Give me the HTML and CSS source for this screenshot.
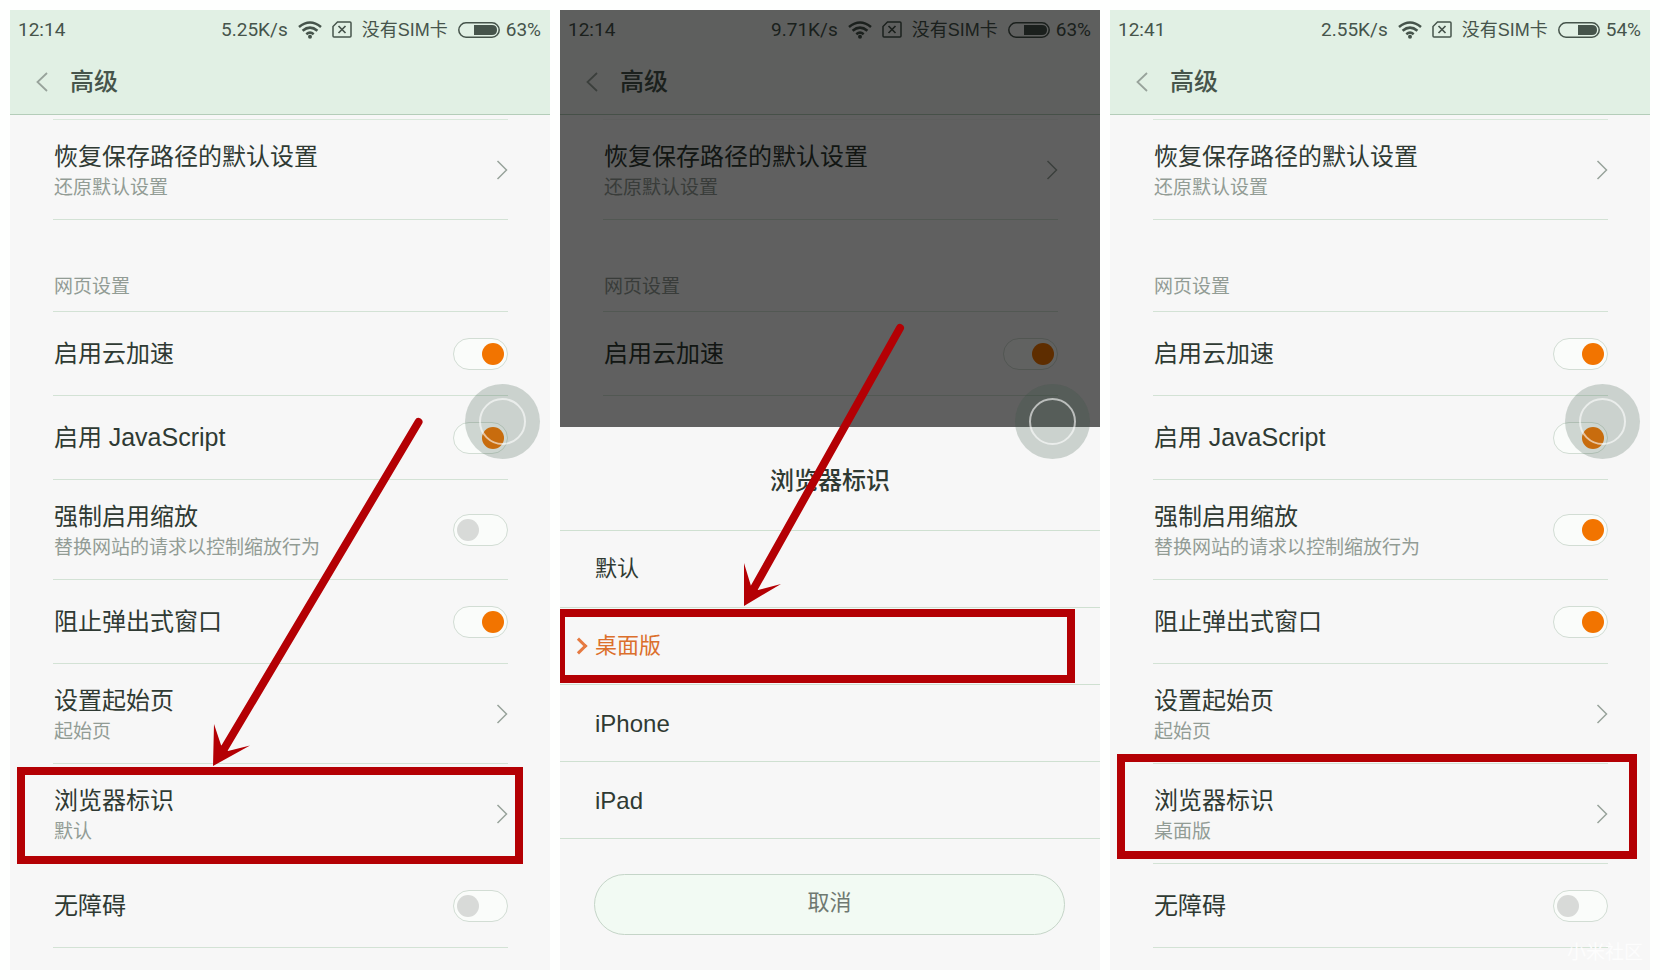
FILE: index.html
```html
<!DOCTYPE html>
<html lang="zh-CN">
<head>
<meta charset="utf-8">
<title>浏览器标识设置</title>
<link rel="stylesheet" href="styles.css">
</head>
<body>
<svg class="sprite" aria-hidden="true">
  <symbol id="wifi" viewBox="0 0 24 18">
    <path d="M1 6Q12-3 23 6M4.600 9.800Q12 3.600 19.400 9.800M8.300 13.200Q12 10.200 15.700 13.200" fill="none" stroke="currentColor" stroke-width="2.600"/>
    <circle cx="12" cy="15.800" r="2" fill="currentColor"/>
  </symbol>
  <symbol id="sim" viewBox="0 0 20 17">
    <path d="M5.500 1H18Q19 1 19 2V15Q19 16 18 16H2Q1 16 1 15V5.500Z" fill="none" stroke="currentColor" stroke-width="1.500"/>
    <path d="M6.500 5L13.500 12M13.500 5L6.500 12" stroke="currentColor" stroke-width="1.700"/>
  </symbol>
  <symbol id="battery63" viewBox="0 0 42 16">
    <rect x=".8" y=".8" width="40.400" height="14.400" rx="7.200" fill="none" stroke="currentColor" stroke-width="1.500"/>
    <path d="M16 3H34Q39 3 39 8T34 13H16Z" fill="currentColor"/>
  </symbol>
  <symbol id="battery54" viewBox="0 0 42 16">
    <rect x=".8" y=".8" width="40.400" height="14.400" rx="7.200" fill="none" stroke="currentColor" stroke-width="1.500"/>
    <path d="M20 3H34Q39 3 39 8T34 13H20Z" fill="currentColor"/>
  </symbol>
  <symbol id="next" viewBox="0 0 12 20">
    <path d="M1.500 1L10.500 10L1.500 19" fill="none" stroke="currentColor" stroke-width="1.500"/>
  </symbol>
  <symbol id="back" viewBox="0 0 12 20">
    <path d="M11 1L1.500 10L11 19" fill="none" stroke="currentColor" stroke-width="1.800"/>
  </symbol>
</svg>

<main class="steps">
  <section class="phone">
    <header class="top">
      <div class="status">
        <time class="clock">12:14</time>
        <span>5.25K/s</span>
        <svg class="icon-wifi"><use href="#wifi"/></svg>
        <svg class="icon-sim"><use href="#sim"/></svg>
        <span class="carrier">没有SIM卡</span>
        <span class="battery"><svg class="icon-battery"><use href="#battery63"/></svg>63%</span>
      </div>
      <div class="titlebar">
        <button class="back" aria-label="返回"><svg class="arrow"><use href="#back"/></svg></button>
        <h1>高级</h1>
      </div>
    </header>
    <div class="settings">
      <button class="row tall"><span class="text"><span class="name">恢复保存路径的默认设置</span><span class="note">还原默认设置</span></span><svg class="arrow"><use href="#next"/></svg></button>
      <h2 class="group">网页设置</h2>
      <label class="row"><span class="name">启用云加速</span><input class="switch" type="checkbox" checked></label>
      <label class="row"><span class="name">启用 <span class="latin">JavaScript</span></span><input class="switch" type="checkbox" checked></label>
      <label class="row tall"><span class="text"><span class="name">强制启用缩放</span><span class="note">替换网站的请求以控制缩放行为</span></span><input class="switch" type="checkbox"></label>
      <label class="row"><span class="name">阻止弹出式窗口</span><input class="switch" type="checkbox" checked></label>
      <button class="row tall"><span class="text"><span class="name">设置起始页</span><span class="note">起始页</span></span><svg class="arrow"><use href="#next"/></svg></button>
      <button class="row tall"><span class="text"><span class="name">浏览器标识</span><span class="note">默认</span></span><svg class="arrow"><use href="#next"/></svg><span class="mark mark-first"></span></button>
      <label class="row"><span class="name">无障碍</span><input class="switch" type="checkbox"></label>
    </div>
    <div class="assist"></div>
    <svg class="pointer" viewBox="0 0 540 960" preserveAspectRatio="none" aria-hidden="true">
      <path d="M408.500 412L214 739" stroke="currentColor" stroke-width="8" stroke-linecap="round"/>
      <path d="M203 756L204 714L211 735L218 741L240 735.500Z" fill="currentColor"/>
    </svg>
  </section>

  <section class="phone">
    <div class="behind">
      <header class="top">
        <div class="status">
          <time class="clock">12:14</time>
          <span>9.71K/s</span>
          <svg class="icon-wifi"><use href="#wifi"/></svg>
          <svg class="icon-sim"><use href="#sim"/></svg>
          <span class="carrier">没有SIM卡</span>
          <span class="battery"><svg class="icon-battery"><use href="#battery63"/></svg>63%</span>
        </div>
        <div class="titlebar">
          <button class="back" aria-label="返回"><svg class="arrow"><use href="#back"/></svg></button>
          <h1>高级</h1>
        </div>
      </header>
      <div class="settings">
        <button class="row tall"><span class="text"><span class="name">恢复保存路径的默认设置</span><span class="note">还原默认设置</span></span><svg class="arrow"><use href="#next"/></svg></button>
        <h2 class="group">网页设置</h2>
        <label class="row"><span class="name">启用云加速</span><input class="switch" type="checkbox" checked></label>
      </div>
    </div>
    <form class="sheet">
      <h2 class="sheet-title">浏览器标识</h2>
      <label class="option"><input type="radio" name="agent">默认</label>
      <label class="option"><input type="radio" name="agent" checked>桌面版<span class="mark mark-option"></span></label>
      <label class="option latin-option"><input type="radio" name="agent">iPhone</label>
      <label class="option latin-option"><input type="radio" name="agent">iPad</label>
      <div class="sheet-foot"><button class="cancel" type="button">取消</button></div>
    </form>
    <div class="assist"></div>
    <svg class="pointer" viewBox="0 0 540 960" preserveAspectRatio="none" aria-hidden="true">
      <path d="M340 318L193 580" stroke="currentColor" stroke-width="8" stroke-linecap="round"/>
      <path d="M184 596L184 553L191 576L198 580L221 574Z" fill="currentColor"/>
    </svg>
  </section>

  <section class="phone">
    <header class="top">
      <div class="status">
        <time class="clock">12:41</time>
        <span>2.55K/s</span>
        <svg class="icon-wifi"><use href="#wifi"/></svg>
        <svg class="icon-sim"><use href="#sim"/></svg>
        <span class="carrier">没有SIM卡</span>
        <span class="battery"><svg class="icon-battery"><use href="#battery54"/></svg>54%</span>
      </div>
      <div class="titlebar">
        <button class="back" aria-label="返回"><svg class="arrow"><use href="#back"/></svg></button>
        <h1>高级</h1>
      </div>
    </header>
    <div class="settings">
      <button class="row tall"><span class="text"><span class="name">恢复保存路径的默认设置</span><span class="note">还原默认设置</span></span><svg class="arrow"><use href="#next"/></svg></button>
      <h2 class="group">网页设置</h2>
      <label class="row"><span class="name">启用云加速</span><input class="switch" type="checkbox" checked></label>
      <label class="row"><span class="name">启用 <span class="latin">JavaScript</span></span><input class="switch" type="checkbox" checked></label>
      <label class="row tall"><span class="text"><span class="name">强制启用缩放</span><span class="note">替换网站的请求以控制缩放行为</span></span><input class="switch" type="checkbox" checked></label>
      <label class="row"><span class="name">阻止弹出式窗口</span><input class="switch" type="checkbox" checked></label>
      <button class="row tall"><span class="text"><span class="name">设置起始页</span><span class="note">起始页</span></span><svg class="arrow"><use href="#next"/></svg></button>
      <button class="row tall"><span class="text"><span class="name">浏览器标识</span><span class="note">桌面版</span></span><svg class="arrow"><use href="#next"/></svg><span class="mark mark-last"></span></button>
      <label class="row"><span class="name">无障碍</span><input class="switch" type="checkbox"></label>
    </div>
    <div class="assist"></div>
    <span class="watermark">小米社区</span>
  </section>
</main>
</body>
</html>
```
FILE: styles.css
```css
* { box-sizing: border-box; }

body {
  margin: 0;
  background: #fefffe;
  color: #2f3a33;
  font-family: "Liberation Sans", "Noto Sans CJK SC", sans-serif;
}

h1, h2 { margin: 0; font-weight: 400; }

button {
  border: 0;
  padding: 0;
  background: none;
  color: inherit;
  font: inherit;
  text-align: left;
}

.sprite { position: absolute; width: 0; height: 0; }

.steps {
  display: grid;
  grid-template-columns: repeat(3, 1fr);
  gap: 10px;
  padding: 10px;
}

.phone {
  position: relative;
  overflow: hidden;
  background: #f7f7f7;
}

/* status bar and title */
.top {
  background: #e1f0e4;
  border-bottom: 1px solid #b4cdb9;
  color: #46544b;
}

.status {
  display: flex;
  align-items: center;
  gap: 10px;
  height: 39px;
  padding: 0 9px 0 8px;
  font-family: Roboto, "Noto Sans CJK SC", sans-serif;
  font-size: 19px;
  line-height: 24px;
}

.clock { flex: 1; }
.carrier { font-family: "Liberation Sans", "Noto Sans CJK SC", sans-serif; font-size: 18px; }
.battery { display: flex; align-items: center; gap: 6px; }
.icon-wifi { width: 24px; height: 18px; }
.icon-sim { width: 20px; height: 17px; }
.icon-battery { width: 42px; height: 16px; }

.titlebar {
  display: flex;
  align-items: center;
  gap: 22px;
  height: 65px;
  padding: 0 26px 0 26px;
}

.titlebar h1 { font-size: 24px; line-height: 34px; font-weight: 500; }
.arrow { display: block; flex: none; width: 12px; height: 20px; color: #98a39b; }

/* settings list */
.settings {
  margin: 4px 42px 22px 43px;
  border-top: 1px solid #d9e8db;
}

.row {
  position: relative;
  display: flex;
  align-items: center;
  justify-content: space-between;
  width: 100%;
  min-height: 84px;
  padding-left: 1px;
  border-bottom: 1px solid #d3e2d5;
}

.tall { min-height: 100px; }
.text { display: flex; flex-direction: column; padding-top: 2px; }
.name { font-size: 24px; line-height: 34px; }
.note { font-size: 19px; line-height: 28px; color: #929c95; }
.latin { font-size: 25px; }

.group {
  padding: 53px 0 11px 1px;
  border-bottom: 1px solid #d3e2d5;
  color: #929c95;
  font-size: 19px;
  line-height: 27px;
}

.switch {
  appearance: none;
  display: flex;
  flex: none;
  align-items: center;
  width: 55px;
  height: 32px;
  margin: 0;
  padding: 0 3px;
  border: 1px solid #d2ddd4;
  border-radius: 16px;
  background: #fafcfa;
}

.switch::before {
  content: "";
  width: 22px;
  height: 22px;
  border-radius: 50%;
  background: #d8dad8;
}

.switch:checked { justify-content: flex-end; }
.switch:checked::before { background: #f27400; }

/* dimmed page under the sheet */
.behind { position: absolute; inset: 0; background: #f7f7f7; }
.behind::after { content: ""; position: absolute; inset: 0; background: rgba(0, 0, 0, 0.61); }
.behind .top { background: #f3f5f3; }
.behind .settings { border-top-color: #f0f3f0; }

.sheet {
  position: absolute;
  left: 0;
  right: 0;
  bottom: 0;
  background: #f7f7f7;
}

.sheet-title {
  border-bottom: 1px solid #cfe0d1;
  font-size: 24px;
  line-height: 34px;
  font-weight: 500;
  padding: 37px 0 32px;
  text-align: center;
}

.option {
  position: relative;
  display: flex;
  align-items: center;
  gap: 12px;
  height: 77px;
  padding-left: 13px;
  border-bottom: 1px solid #cfe0d1;
  font-size: 22px;
  line-height: 30px;
}

.option input {
  appearance: none;
  display: grid;
  align-items: center;
  width: 10px;
  height: 16px;
  margin: 0;
}

.option input:checked::before {
  content: "";
  width: 9px;
  height: 9px;
  border: solid #e67a41;
  border-width: 3px 3px 0 0;
  transform: rotate(45deg);
}

.option:has(input:checked) { color: #dc6f2c; }
.latin-option { padding-top: 2px; font-size: 24px; }

.sheet-foot { padding: 35px 35px 35px 34px; }

.cancel {
  width: 100%;
  height: 61px;
  border: 1px solid #c5d5c8;
  border-radius: 31px;
  background: #f2faf3;
  color: #6f7971;
  font-size: 22px;
  line-height: 30px;
  padding-bottom: 3px;
  text-align: center;
}

/* floating button */
.assist {
  position: absolute;
  top: 374px;
  right: 10px;
  display: grid;
  place-items: center;
  width: 75px;
  height: 75px;
  border-radius: 50%;
  background: rgba(50, 82, 64, 0.22);
}

.assist::before {
  content: "";
  width: 43px;
  height: 43px;
  border: 2px solid rgba(255, 255, 255, 0.6);
  border-radius: 50%;
}

/* red annotations */
.mark { position: absolute; border: 8px solid #b40004; }
.mark-first { top: 3px; bottom: -1px; left: -36px; right: -15px; }
.mark-option { top: 1px; bottom: 1px; left: -3px; right: 25px; }
.mark-last { top: -10px; bottom: 4px; left: -36px; right: -29px; }

.pointer {
  position: absolute;
  inset: 0;
  width: 100%;
  height: 100%;
  color: #b40004;
  pointer-events: none;
}

.watermark {
  position: absolute;
  right: 7px;
  bottom: 6px;
  color: #fdfdfd;
  font-size: 19px;
  line-height: 22px;
}
```
